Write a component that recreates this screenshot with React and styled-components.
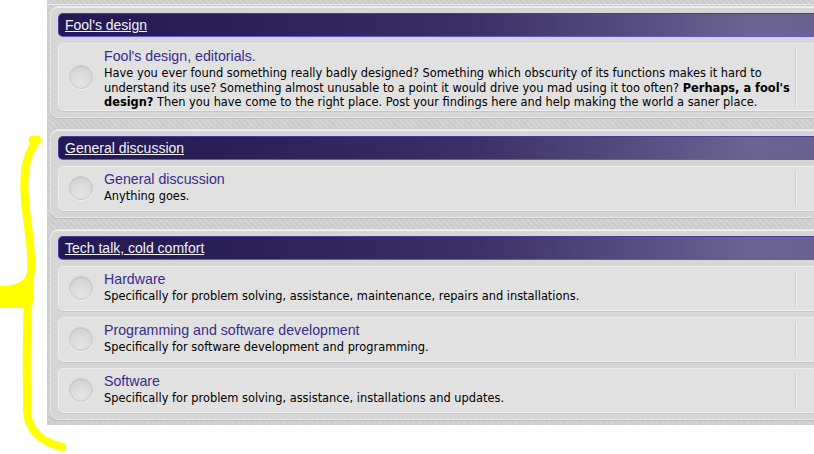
import React from "react";
import styled, { createGlobalStyle } from "styled-components";

const Global = createGlobalStyle`
  html, body { margin: 0; padding: 0; background: #ffffff; }
  body { font-family: "DejaVu Sans", Verdana, sans-serif; }
`;

const Screen = styled.div`
  position: relative;
  display: flex;
  align-items: flex-start;
  width: 814px;
  height: 454px;
  overflow: hidden;
  background: #ffffff;
`;

const Gutter = styled.div`
  flex: 0 0 47px;
`;

const Page = styled.div`
  flex: 1 1 auto;
  overflow: hidden;
  background-color: #d2d2d2;
  background-image: repeating-linear-gradient(45deg, rgba(255,255,255,0.05) 0 2px, rgba(0,0,0,0.03) 2px 4px);
  padding: 0 0 5px 3px;
`;

const Inner = styled.div`
  width: 1000px;
  display: flex;
  flex-direction: column;
  gap: 11px;
`;

const TopEdge = styled.div`
  height: 4px;
  border-bottom: 1px solid #e9e9e9;
  margin-bottom: -10px;
  margin-left: -3px;
`;

const Section = styled.section`
  background: #d6d6d6;
  border: 1px solid #e6e6e6;
  border-radius: 8px;
  box-shadow: 0 1px 0 #bcbcbc, inset 0 1px 0 #f2f2f2;
  padding: 6px 7px 6px 7px;
  display: flex;
  flex-direction: column;
  gap: 6px;
`;

const Header = styled.div`
  height: 22px;
  line-height: 22px;
  border: 1px solid #473ba3;
  border-bottom-color: #6554d4;
  border-radius: 5px;
  padding-left: 6px;
  background: linear-gradient(to right, #241950 0px, #2a1f57 180px, #3b3166 420px, #5a5283 600px, #6b6492 690px, #6a6391 760px, #5e5585 900px);
`;

const HeaderLink = styled.a`
  font-family: "Liberation Sans", Arial, sans-serif;
  font-size: 14px;
  color: #f4f2fa;
  text-decoration: underline;
  cursor: pointer;
`;

const Row = styled.div`
  display: flex;
  min-height: 43px;
  background: #e1e1e1;
  border: 1px solid #ececec;
  border-radius: 5px;
  box-shadow: 0 1px 0 #c6c6c6;
`;

const Main = styled.div`
  flex: 0 0 736px;
  display: flex;
  align-items: center;
`;

const Bullet = styled.div`
  flex: 0 0 22px;
  height: 22px;
  margin: 0 11px 0 10px;
  border-radius: 50%;
  border: 1px solid #c9c9c9;
  background: radial-gradient(circle at 50% 75%, #e4e4e4 0%, #d9d9d9 55%, #cdcdcd 100%);
  box-shadow: inset 0 1px 1px rgba(0,0,0,0.05), 0 1px 0 #eeeeee;
`;

const Text = styled.div`
  align-self: flex-start;
  padding: 4px 0 0 0;
  flex: 1;
`;

const Title = styled.a`
  display: block;
  font-family: "Liberation Sans", Arial, sans-serif;
  font-size: 14.2px;
  line-height: 16px;
  color: #392c8c;
  text-decoration: none;
`;

const Desc = styled.div`
  margin-top: 2px;
  font-family: "DejaVu Sans", Verdana, sans-serif;
  font-size: 11.4px;
  line-height: 14.5px;
  color: #000000;
  white-space: nowrap;
  b { font-weight: bold; }
`;

const Stats = styled.div`
  flex: 1;
  margin: 4px 0;
  border-left: 1px solid #cbcbcb;
  box-shadow: inset 1px 0 0 #efefef;
`;

const Scribble = styled.svg`
  position: absolute;
  left: 0;
  top: 0;
  pointer-events: none;
`;

const sections = [
  {
    name: "Fool's design",
    forums: [
      {
        title: "Fool's design, editorials.",
        desc: (
          <>
            Have you ever found something really badly designed? Something which obscurity of its functions makes it hard to
            <br />
            understand its use? Something almost unusable to a point it would drive you mad using it too often? <b>Perhaps, a fool's</b>
            <br />
            <b>design?</b> Then you have come to the right place. Post your findings here and help making the world a saner place.
          </>
        ),
      },
    ],
  },
  {
    name: "General discussion",
    forums: [{ title: "General discussion", desc: "Anything goes." }],
  },
  {
    name: "Tech talk, cold comfort",
    forums: [
      { title: "Hardware", desc: "Specifically for problem solving, assistance, maintenance, repairs and installations." },
      { title: "Programming and software development", desc: "Specifically for software development and programming." },
      { title: "Software", desc: "Specifically for problem solving, assistance, installations and updates." },
    ],
  },
];

export default function App() {
  return (
    <Screen>
      <Global />
      <Gutter />
      <Page>
        <Inner>
          <TopEdge />
          {sections.map((s) => (
            <Section key={s.name}>
              <Header>
                <HeaderLink>{s.name}</HeaderLink>
              </Header>
              {s.forums.map((f) => (
                <Row key={f.title}>
                  <Main>
                    <Bullet />
                    <Text>
                      <Title>{f.title}</Title>
                      <Desc>{f.desc}</Desc>
                    </Text>
                  </Main>
                  <Stats />
                </Row>
              ))}
            </Section>
          ))}
        </Inner>
      </Page>
      <Scribble width="814" height="454" viewBox="0 0 814 454">
        <g fill="none" stroke="#ffff00" strokeLinecap="round" strokeLinejoin="round">
          <path d="M35 143 C 25 158, 23 175, 25 200 C 27 225, 33 250, 31 272 C 29 285, 20 290, 0 292" strokeWidth="8" />
          <path d="M33 140 L 37 140" strokeWidth="9" />
          <path d="M28 300 C 26 340, 27 380, 27 410 C 28 432, 42 442, 62 447" strokeWidth="8" />
        </g>
        <path d="M0 286 C 12 287, 25 282, 33 270 L 34 300 L 31 308 L 0 308 Z" fill="#ffff00" />
      </Scribble>
    </Screen>
  );
}
